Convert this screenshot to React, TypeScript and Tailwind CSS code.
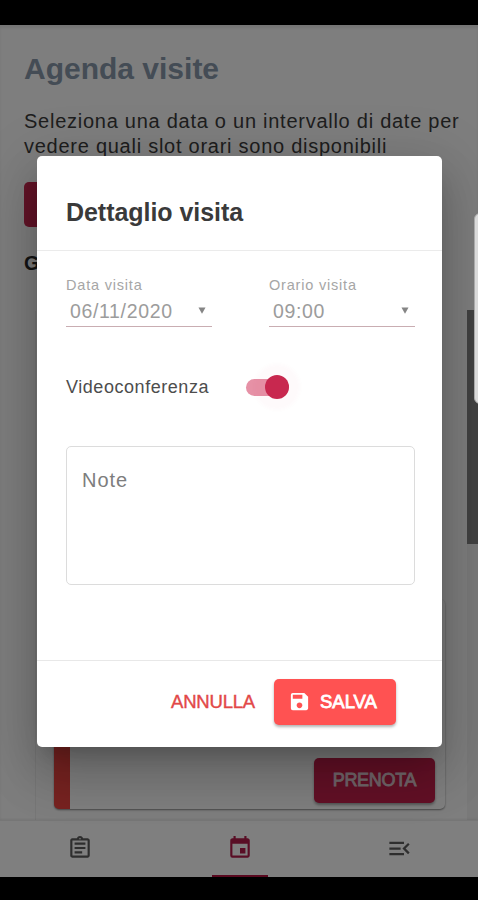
import React from "react";
import { MdEvent, MdMenuOpen, MdOutlineAssignment, MdSave } from "react-icons/md";

function Field({ label, value }: { label: string; value: string }) {
  return (
    <div className="w-[146px]">
      <div className="h-[18px] text-[14.5px] leading-[18px] tracking-[0.8px] whitespace-nowrap text-[#a6a6a6]">{label}</div>
      <div className="flex h-[33px] items-center justify-between border-b border-[#c9adb2] pt-[2px] pr-[6px] pl-[4px]">
        <span className="text-[19.5px] leading-[24px] tracking-[0.65px] text-[#9c9c9c]">{value}</span>
        <svg className="mb-[2px] h-[7px] w-[8px]" viewBox="0 0 8 7">
          <path d="M0.5 0.5h7L4 6.8z" fill="#858585" />
        </svg>
      </div>
    </div>
  );
}

function VisitDialog() {
  return (
    <div className="absolute top-[156px] left-[37px] flex h-[591px] w-[405px] flex-col rounded-[5px] bg-white shadow-[0_14px_19px_-9px_rgba(0,0,0,0.2),0_30px_48px_4px_rgba(0,0,0,0.14),0_11px_58px_10px_rgba(0,0,0,0.12)]">
      <div className="flex h-[95px] items-center border-b border-[#ebebeb] pt-[17px] pl-[29px]">
        <h2 className="text-[25px] leading-[30px] font-bold tracking-[-0.05px] text-[#3a3a3a]">Dettaglio visita</h2>
      </div>
      <div className="flex flex-1 flex-col pt-[25px] pr-[27px] pl-[29px]">
        <div className="flex justify-between">
          <Field label="Data visita" value="06/11/2020" />
          <Field label="Orario visita" value="09:00" />
        </div>
        <div className="mt-[45px] flex h-[30px] items-center">
          <span className="w-[180px] text-[18px] leading-[24px] tracking-[0.55px] text-[#4d4d4d]">Videoconferenza</span>
          <span className="flex h-[17px] w-[43px] items-center justify-end rounded-full bg-[#e691a6]">
            <span className="size-[24px] shrink-0 rounded-full bg-[#c8284f] shadow-[0_0_4px_11px_rgba(200,40,79,0.025)]" />
          </span>
        </div>
        <div className="mt-[44px] h-[139px] rounded-[5px] border border-[#dcdcdc] pt-[21px] pl-[15px] text-[20px] leading-[24px] tracking-[1px] text-[#7d7d7d]">
          Note
        </div>
      </div>
      <div className="flex h-[87px] items-center justify-end gap-[19px] border-t border-[#e8e8e8] pr-[46px] pb-[5px]">
        <span className="text-[18.5px] leading-[24px] tracking-[-0.2px] text-[#e24848] [-webkit-text-stroke:0.4px_#e24848]">ANNULLA</span>
        <button className="flex h-[46px] w-[122px] items-center rounded-[5px] bg-[#ff5252] pl-[14px] text-white shadow-[0_2px_3px_rgba(0,0,0,0.3)]">
          <MdSave className="size-[23px]" />
          <span className="ml-[9px] text-[18.5px] leading-[24px] [-webkit-text-stroke:0.8px_white]">SALVA</span>
        </button>
      </div>
    </div>
  );
}

export default function App() {
  return (
    <div className="relative flex h-[900px] w-[478px] flex-col overflow-hidden bg-white font-['Liberation_Sans',Arial,sans-serif]">
      <div className="h-[25px] shrink-0 bg-black" />
      <main className="flex h-[795px] shrink-0 flex-col overflow-hidden bg-[#fdfdfd] shadow-[inset_0_3px_3px_rgba(0,0,0,0.08)]">
        <h1 className="mt-[26px] ml-[24px] text-[30px] leading-[36px] font-bold text-[#8898ab]">Agenda visite</h1>
        <p className="mt-[22px] ml-[24px] text-[20px] leading-[25px] tracking-[0.74px] whitespace-nowrap text-[#3c3c3c]">
          Seleziona una data o un intervallo di date per
          <br />
          vedere quali slot orari sono disponibili
        </p>
        <div className="mt-[23px] ml-[24px] h-[45px] w-[160px] shrink-0 rounded-[5px] bg-[#c62850]" />
        <h3 className="mt-[24px] ml-[24px] text-[20px] leading-[24px] font-bold text-[#2b2b2b]">Giorno</h3>
        <div className="mt-[36px] flex flex-1">
          <section className="ml-[35px] flex w-[432px] flex-col justify-end border-l border-[#efefef] pl-[18px]">
            <div className="mb-[11px] flex h-[210px] w-[391px] items-end justify-end rounded-[5px] border-l-[16px] border-[#f04642] bg-white pr-[10px] pb-[6px] shadow-[0_1px_2px_rgba(0,0,0,0.45)]">
              <button className="flex h-[45px] w-[121px] items-center justify-center rounded-[5px] bg-[#c7204c] text-[18px] tracking-[-0.3px] text-[#e3cdd4] shadow-[0_2px_3px_rgba(0,0,0,0.35)] [-webkit-text-stroke:0.8px_#e3cdd4]">
                PRENOTA
              </button>
            </div>
          </section>
          <aside className="flex-1 bg-[#f2f2f2]">
            <div className="-mt-px h-[234px] bg-[#858585]" />
          </aside>
        </div>
      </main>
      <nav className="grid h-[57px] shrink-0 grid-cols-3 border-t border-[#ececec] bg-white pl-[2px] text-[#5c5c5c] shadow-[0_-1px_2px_rgba(0,0,0,0.08)]">
        <span className="flex items-center justify-center pr-[2px] pb-[2px]">
          <MdOutlineAssignment className="size-[26px]" />
        </span>
        <span className="flex flex-col items-center justify-end text-[#b31c4b]">
          <MdEvent className="mb-[14px] size-[26px]" />
          <span className="h-[2px] w-[56px] bg-[#b3103f]" />
        </span>
        <span className="flex items-center justify-center pb-[1px] pl-[2px]">
          <MdMenuOpen className="size-[27px]" />
        </span>
      </nav>
      <div className="flex-1 bg-black" />
      <div className="absolute inset-0 bg-black/50" />
      <VisitDialog />
      <div className="absolute top-[213px] left-[474px] h-[191px] w-[12px] rounded-[6px] border border-[#aaaaaa] bg-[#dadada]" />
    </div>
  );
}
